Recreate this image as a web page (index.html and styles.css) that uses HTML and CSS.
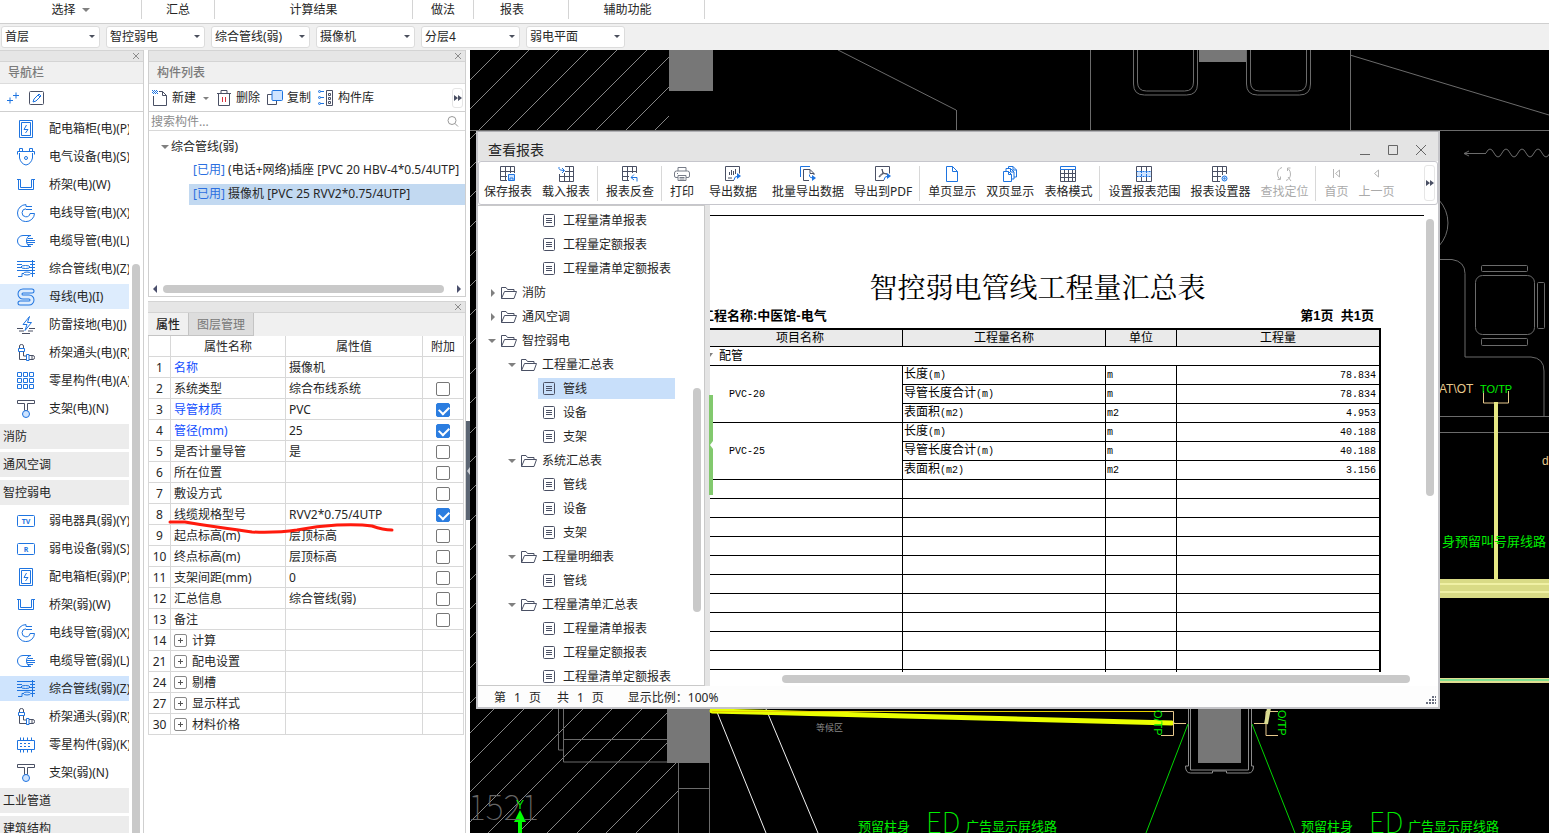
FILE: index.html
```html
<!DOCTYPE html>
<html lang="zh-CN">
<head>
<meta charset="utf-8">
<title>查看报表</title>
<link rel="stylesheet" href="styles.css">
</head>
<body>
<svg class="defs" aria-hidden="true">
  <symbol id="box" viewBox="0 0 18 18"><path class="b" d="M2.500.5h13v17h-13zM4.500 2.500h9v13h-9z"/><path class="b" d="M9.500 5 7 9.500h4L8.500 13"/></symbol>
  <symbol id="device" viewBox="0 0 18 18"><path class="b" d="M.5 6.500v-3h17v3M2.500 3.500v-3h3v3M12.500 3.500v-3h3v3M2.500 5v5Q4 16 9 17Q14 16 15.500 10V5"/><circle class="b" cx="9" cy="10" r="1.500"/></symbol>
  <symbol id="tray" viewBox="0 0 18 18"><path class="b" d="M0 3.500h3.500v8h11v-8H18M1.500 3.500v10h15v-10"/></symbol>
  <symbol id="wire" viewBox="0 0 18 18"><path class="b" d="M9 .6A8.500 8.500 0 1 0 17.500 9.500H13A4 4 0 1 1 9 4.800M9 .6v1.900M9 2.500h6M9 5.500h6"/></symbol>
  <symbol id="cable" viewBox="0 0 18 18"><path class="b" d="M14 3.500H6a5.500 5.500 0 0 0 0 11h8M14 3.500c-6 0-6 11 0 11M11 6.500h5M10 8.500h8M10 10.500h8M11 12.500h5"/></symbol>
  <symbol id="mixed" viewBox="0 0 18 18"><path class="b" d="M0 1.500h18M0 4.500h5M13 4.500h5M0 7.500h4M13 7.500h5M1 16.500h4v-3h2M14 13.500h4M0 10.500h18M15.500 0v17"/><ellipse class="b" cx="8.500" cy="7" rx="4.500" ry="1.500"/><ellipse class="b" cx="10" cy="13.500" rx="3.500" ry="1.500"/></symbol>
  <symbol id="bus" viewBox="0 0 18 18"><path d="M15 3H6a3 3 0 0 0 0 6h6a3 3 0 0 1 0 6H3" fill="none" stroke="#1e74e0" stroke-width="5" stroke-linecap="round"/><path d="M15 3H6a3 3 0 0 0 0 6h6a3 3 0 0 1 0 6H3" fill="none" stroke="#ddecfd" stroke-width="3" stroke-linecap="round"/></symbol>
  <symbol id="bolt" viewBox="0 0 18 18"><path class="b" d="M12.500.5 6 8.500h4L8 14.500l6.500-8h-4z"/><path class="k" d="M0 12.500h6M12 12.500h6M2 15h5M11 15h5M5 17.500h8"/></symbol>
  <symbol id="elbow" viewBox="0 0 18 18"><path class="k" d="M2.500 4V2q0-1.500 2-1.500t2 1.500v2M2.500 8v7.500h7M6.500 8v4h3M12 11.500h4q1.500 0 1.500 2t-1.500 2h-4M15 11.500v4"/><path class="b" d="M1.500 4.500h6v3h-6zM9.500 10.500h2.500v6H9.500z"/></symbol>
  <symbol id="grid9" viewBox="0 0 18 18"><path class="b" d="M.5.5h4v4h-4zM6.500.5h4v4h-4zM12.500.5h4v4h-4zM.5 6.500h4v4h-4zM6.500 6.500h4v4h-4zM12.500 6.500h4v4h-4zM.5 12.500h4v4h-4zM6.500 12.500h4v4h-4zM12.500 12.500h4v4h-4z"/></symbol>
  <symbol id="support" viewBox="0 0 18 18"><path class="k" d="M.5.5h17v3h-7v7h-3v-7h-7z"/><circle class="b f" cx="9" cy="14" r="3.500"/></symbol>
  <symbol id="tv" viewBox="0 0 18 18"><rect class="b" x=".5" y="3.500" width="17" height="11" rx="1"/><text class="ict" x="9" y="12" text-anchor="middle">TV</text></symbol>
  <symbol id="rr" viewBox="0 0 18 18"><rect class="b" x=".5" y="3.500" width="17" height="11" rx="1"/><text class="ict" x="9" y="12" text-anchor="middle">R</text></symbol>
  <symbol id="chip" viewBox="0 0 18 18"><path class="b" d="M.5 4.500h17v9H.5zM3.500 1.500v3M6.500 1.500v3M10.500 1.500v3M14.500 1.500v3M3.500 13.500v3M6.500 13.500v3M10.500 13.500v3M14.500 13.500v3"/><path class="b" stroke-dasharray="2 2" d="M3 7.500h12M3 10.500h12"/></symbol>
  <symbol id="folder" viewBox="0 0 16 14"><path class="k" d="M.5 12.500V1.500h4.500l1.500 2h6.500v2M.5 12.500l3-7h12l-2.500 7z"/></symbol>
  <symbol id="doc" viewBox="0 0 12 13"><rect class="k" x=".5" y=".5" width="11" height="12" rx="1"/><path class="k" d="M3 4.500h6M3 6.500h6M3 8.500h6"/></symbol>
  <symbol id="t-save" viewBox="0 0 16 16"><path class="k" d="M7 14.500H.5V.5h14V7M5.500.5v14M10.500.5V7M.5 5.500h14M.5 10.500H7"/><path class="b f" d="M8.500 8.500h6v6h-6zM10 14v-2h3v2"/></symbol>
  <symbol id="t-load" viewBox="0 0 16 16"><path class="k" d="M7 .5h8.500v15H1.500V8M6.500 7v8M11.500.5v15M7 5.500h8M1.500 10.500h14"/><path class="b" d="M1 1v1.500q0 2 5 2M4 2l2.500 2.500L4 7"/></symbol>
  <symbol id="t-back" viewBox="0 0 16 16"><path class="k" d="M7 14.500H.5V.5h14V7M5.500.5v14M10.500.5V7M.5 5.500h14M.5 10.500H7"/><path class="b" d="M12 8.500 9 11.500l3 2.500M9 11.500h6v4"/></symbol>
  <symbol id="t-print" viewBox="0 0 16 16"><path class="g" d="M4 5V1.500h8V5M4 11.500H2Q.5 11.500.5 10V7Q.5 5 2.500 5h11q2 0 2 2v3q0 1.500-1.500 1.500h-2M4 9.500h8v5H4zM5.500 11.500h5M5.500 13h5M3 7.500h1"/></symbol>
  <symbol id="t-out" viewBox="0 0 16 16"><path class="k" d="M9 14.500H.5V.5h14v7M3 12h4M4.500 9v-3M6.500 9V4M8.500 9V5M10.500 8V3"/><path class="b" d="M9 14q0-3.500 4-4"/><path fill="#1e74e0" d="m12 7 4 3-4 3z"/></symbol>
  <symbol id="t-batch" viewBox="0 0 16 16"><path class="b" d="M.5 11V.5H10"/><path class="k" d="M9 14.500H3.500v-11H10l4 4V9M10 3.500v4h4"/><path class="b" d="M9.500 8.500v1.500q0 2 4 2"/><path fill="#1e74e0" d="m12 9 4 3-4 3z"/></symbol>
  <symbol id="t-pdf" viewBox="0 0 16 16"><path class="k" d="M9 14.500H.5V.5h14v7M7 3c2 5-1 7-3 8 1-3 4-4 8-3C9 8 7 6 7 3"/><path class="b" d="M9 14q0-3.500 4-4"/><path fill="#1e74e0" d="m12 7 4 3-4 3z"/></symbol>
  <symbol id="t-page" viewBox="0 0 16 16"><path class="b" d="M2.500.5h6l5 5v10h-11zM8.500.5v5h5"/></symbol>
  <symbol id="t-pages" viewBox="0 0 16 16"><path class="b" d="M1.500 5.500h5l3 3v7h-8zM6.500 5.500v3h3M4 5V2.500h4.500l3.500 3.500v7H10M6.500 2V.5H11L14.500 4v7H12M8.500 2.500V6H12M11 .5V4h3.500"/></symbol>
  <symbol id="t-mode" viewBox="0 0 16 16"><path class="k" d="M.5 3.500v12h15v-12M4.500 4v11M8.500 4v11M12.500 4v11M.5 7.500h15M.5 11.500h15"/><path class="b" d="M.5.5h15v3H.5z"/></symbol>
  <symbol id="t-range" viewBox="0 0 16 16"><path class="k" d="M.5.5h15v15H.5zM5.500.5v15M10.500.5v15"/><path fill="#cfe4ff" d="M1 5h14v6H1z"/><path class="b" stroke-dasharray="2 1" d="M.5 5.500h15M.5 10.500h15M5.500 5v6M10.500 5v6"/></symbol>
  <symbol id="t-set" viewBox="0 0 16 16"><path class="k" d="M8 15.500H.5V.5h14V8M5.500.5v15M10.500.5V9M.5 5.500h14M.5 10.500H9"/><circle class="b f" cx="12.500" cy="12.500" r="2.500"/><circle class="b" cx="12.500" cy="12.500" r=".7"/></symbol>
  <symbol id="t-find" viewBox="0 0 16 16"><path class="l" d="M6 1.500Q1.500 3 1.500 8q0 3 2 5M1.500 13.500h3v-3M10 14.500Q14.500 13 14.500 8q0-3-2-5M14.500 2h-3v3M12 11l3 4"/></symbol>
  <symbol id="t-first" viewBox="0 0 16 16"><path class="l" d="M5.500 3v9M11.500 4v7l-4-3.500z"/></symbol>
  <symbol id="t-prev" viewBox="0 0 16 16"><path class="l" d="M10.500 4v7l-4-3.500z"/></symbol>
  <symbol id="more" viewBox="0 0 8 6"><path fill="#4a4f63" d="M0 0 4 3 0 6zM4 0l4 3-4 3z"/></symbol>
  <symbol id="close" viewBox="0 0 8 8"><path class="x" d="m1 1 6 6M7 1 1 7"/></symbol>
</svg>

<header class="ribbon">
  <span>选择<i class="down"></i></span><span>汇总</span><span>计算结果</span><span>做法</span><span class="shift">报表</span><span class="shift">辅助功能</span>
</header>

<div class="filters">
  <label class="pick"><select aria-label="楼层"><option>首层</option></select></label>
  <label class="pick"><select aria-label="专业"><option>智控弱电</option></select></label>
  <label class="pick"><select aria-label="构件类型"><option>综合管线(弱)</option></select></label>
  <label class="pick"><select aria-label="构件"><option>摄像机</option></select></label>
  <label class="pick"><select aria-label="分层"><option>分层4</option></select></label>
  <label class="pick"><select aria-label="图纸"><option>弱电平面</option></select></label>
</div>

<main class="work">
  <aside class="nav">
    <div class="strip"><svg><use href="#close"/></svg></div>
    <h2 class="caption">导航栏</h2>
    <div class="tools">
      <svg class="i16" viewBox="0 0 16 16"><path class="b" d="M2 10.500h6M5 7.500v6M8 5.500h6M11 2.500v6"/></svg>
      <svg class="i16" viewBox="0 0 16 16"><rect class="k" x=".5" y="1.500" width="14" height="13" rx="1"/><path class="b" d="m4 12 1-3 5-5 2 2-5 5zM9 5l2 2"/></svg>
    </div>
    <div class="navbody">
      <ul class="navlist">
        <li><svg><use href="#box"/></svg>配电箱柜(电)(P)</li>
        <li><svg><use href="#device"/></svg>电气设备(电)(S)</li>
        <li><svg><use href="#tray"/></svg>桥架(电)(W)</li>
        <li><svg><use href="#wire"/></svg>电线导管(电)(X)</li>
        <li><svg><use href="#cable"/></svg>电缆导管(电)(L)</li>
        <li><svg><use href="#mixed"/></svg>综合管线(电)(Z)</li>
        <li class="hot"><svg><use href="#bus"/></svg>母线(电)(I)</li>
        <li><svg><use href="#bolt"/></svg>防雷接地(电)(J)</li>
        <li><svg><use href="#elbow"/></svg>桥架通头(电)(R)</li>
        <li><svg><use href="#grid9"/></svg>零星构件(电)(A)</li>
        <li><svg><use href="#support"/></svg>支架(电)(N)</li>
        <li class="group">消防</li>
        <li class="group">通风空调</li>
        <li class="group">智控弱电</li>
        <li><svg><use href="#tv"/></svg>弱电器具(弱)(Y)</li>
        <li><svg><use href="#rr"/></svg>弱电设备(弱)(S)</li>
        <li><svg><use href="#box"/></svg>配电箱柜(弱)(P)</li>
        <li><svg><use href="#tray"/></svg>桥架(弱)(W)</li>
        <li><svg><use href="#wire"/></svg>电线导管(弱)(X)</li>
        <li><svg><use href="#cable"/></svg>电缆导管(弱)(L)</li>
        <li class="on"><svg><use href="#mixed"/></svg>综合管线(弱)(Z)</li>
        <li><svg><use href="#elbow"/></svg>桥架通头(弱)(R)</li>
        <li><svg><use href="#chip"/></svg>零星构件(弱)(K)</li>
        <li><svg><use href="#support"/></svg>支架(弱)(N)</li>
        <li class="group">工业管道</li>
        <li class="group">建筑结构</li>
      </ul>
      <div class="navthumb"></div>
    </div>
  </aside>

  <div class="mid">
    <section class="parts">
      <div class="strip"><svg><use href="#close"/></svg></div>
      <h2 class="caption">构件列表</h2>
      <div class="tools parttools">
        <button><svg class="i16" viewBox="0 0 16 16"><path class="k" d="M1.500 6v9.500h13v-10l-4-4H7M10.500 1.500v4h4"/><path class="b" stroke-dasharray="1 1" d="M0 .5h5M1 1.500h5M0 2.500h5M1 3.500h5"/></svg>新建<i class="down small"></i></button>
        <button><svg class="i16" viewBox="0 0 16 16"><path class="k" d="M1 3.500h14M2.500 3.500v12h11v-12M5 3V.5h6V3"/><path stroke="#d8323c" d="M6.500 7v5M9.500 7v5"/></svg>删除</button>
        <button><svg class="i16" viewBox="0 0 16 16"><path class="k" d="M5 4.500H.5v10h9V11"/><rect class="b f" x="5" y=".5" width="10.500" height="10" rx="1"/></svg>复制</button>
        <button><svg class="i16" viewBox="0 0 16 16"><path class="b" d="M1 1.500h5M1 7.500h5M1 13.500h5"/><circle class="b f" cx="1.500" cy="1.500" r="1"/><circle class="b f" cx="1.500" cy="7.500" r="1"/><circle class="b f" cx="1.500" cy="13.500" r="1"/><path class="k" d="M8.500.5h6v15h-6zM10.500 3.500h2v2h-2zM10.500 7.500h2v2h-2zM10.500 11.500h2v2h-2z"/></svg>构件库</button>
        <span class="morebtn"><svg><use href="#more"/></svg></span>
      </div>
      <label class="search"><input type="text" aria-label="搜索构件" placeholder="搜索构件..."><svg class="i12" viewBox="0 0 12 12"><circle cx="5" cy="5.500" r="4" fill="none" stroke="#999"/><path stroke="#999" d="m8 8.500 3 3"/></svg></label>
      <div class="parttree">
        <div class="root"><i class="down"></i>综合管线(弱)</div>
        <div class="leaf"><em>[已用]</em> (电话+网络)插座 [PVC 20 HBV-4*0.5/4UTP]</div>
        <div class="leaf sel"><em>[已用]</em> 摄像机 [PVC 25 RVV2*0.75/4UTP]</div>
      </div>
      <div class="hscroll"><i class="left"></i><b></b><i class="right"></i></div>
    </section>

    <section class="props">
      <div class="strip"><svg><use href="#close"/></svg></div>
      <div class="tabs"><button class="cur">属性</button><button>图层管理</button></div>
      <table class="ptable">
        <colgroup><col class="c0"><col class="c1"><col class="c2"><col class="c3"></colgroup>
        <tr><th></th><th>属性名称</th><th>属性值</th><th>附加</th></tr>
        <tr><td>1</td><td class="link">名称</td><td>摄像机</td><td></td></tr>
        <tr><td>2</td><td>系统类型</td><td>综合布线系统</td><td><input type="checkbox" aria-label="系统类型"></td></tr>
        <tr><td>3</td><td class="link">导管材质</td><td>PVC</td><td><input type="checkbox" aria-label="导管材质" checked></td></tr>
        <tr><td>4</td><td class="link">管径(mm)</td><td>25</td><td><input type="checkbox" aria-label="管径" checked></td></tr>
        <tr><td>5</td><td>是否计量导管</td><td>是</td><td><input type="checkbox" aria-label="是否计量导管"></td></tr>
        <tr><td>6</td><td>所在位置</td><td></td><td><input type="checkbox" aria-label="所在位置"></td></tr>
        <tr><td>7</td><td>敷设方式</td><td></td><td><input type="checkbox" aria-label="敷设方式"></td></tr>
        <tr><td>8</td><td>线缆规格型号</td><td>RVV2*0.75/4UTP</td><td><input type="checkbox" aria-label="线缆规格型号" checked></td></tr>
        <tr><td>9</td><td>起点标高(m)</td><td>层顶标高</td><td><input type="checkbox" aria-label="起点标高"></td></tr>
        <tr><td>10</td><td>终点标高(m)</td><td>层顶标高</td><td><input type="checkbox" aria-label="终点标高"></td></tr>
        <tr><td>11</td><td>支架间距(mm)</td><td>0</td><td><input type="checkbox" aria-label="支架间距"></td></tr>
        <tr><td>12</td><td>汇总信息</td><td>综合管线(弱)</td><td><input type="checkbox" aria-label="汇总信息"></td></tr>
        <tr><td>13</td><td>备注</td><td></td><td><input type="checkbox" aria-label="备注"></td></tr>
        <tr><td>14</td><td><button class="plus" aria-label="展开"></button>计算</td><td></td><td></td></tr>
        <tr><td>21</td><td><button class="plus" aria-label="展开"></button>配电设置</td><td></td><td></td></tr>
        <tr><td>24</td><td><button class="plus" aria-label="展开"></button>剔槽</td><td></td><td></td></tr>
        <tr><td>27</td><td><button class="plus" aria-label="展开"></button>显示样式</td><td></td><td></td></tr>
        <tr><td>30</td><td><button class="plus" aria-label="展开"></button>材料价格</td><td></td><td></td></tr>
      </table>
      <svg class="mark" viewBox="0 0 230 16"><path d="M3 3 18 3Q35 6 50 8Q72 11 85 13Q110 14 130 11Q150 7 170 6Q192 5 205 7Q216 11 225 11" fill="none" stroke="#ff1a0d" stroke-width="3" stroke-linecap="round"/></svg>
    </section>
    <div class="grab"></div>
  </div>

  <section class="canvas">
    <svg class="cad">
      <defs><clipPath id="floor"><path d="M470 50h199v81H470zM470 131h8v578h-8zM470 708h198v55h10v70H470z"/></clipPath></defs>
      <g transform="translate(-470,-50)" fill="none" stroke="#6b6b6b">
        <g clip-path="url(#floor)" stroke="#858585">
          <path d="M470 80l60-60M470 109l90-90M470 139l120-120M470 168l150-150M470 197l170-170M470 227l200-200M470 256l200-200M470 286l200-200M470 315l200-200"/>
          <path d="M470 344l30-30M470 374l30-30M470 403l30-30M470 433l30-30M470 462l30-30M470 491l30-30M470 521l30-30M470 550l30-30M470 580l30-30M470 609l30-30M470 638l30-30M470 668l30-30M470 703l30-30"/>
          <path d="M470 733l60-60M470 763l90-90M470 792l120-120M470 822l150-150M470 851l180-180M470 881l210-210M470 910l210-210M470 940l210-210M470 969l210-210M470 999l210-210"/>
        </g>
        <path d="M558.500 705v45h5M563.500 705v57h105M563.500 739.500h105M709.500 705v128M678.500 763v70M678 788.500h31"/>
        <path d="M669 50h44v41h-44zM667 705h43v58h-43zM1199 50h47v12h-47z" fill="#777" stroke="none"/>
        <path d="M470 130.500h1079M956.500 130v-20M956 110 838 50M1090.500 50v80M1350.500 50v80M1350 55l199 60"/>
        <path d="M1133.500 50v34q0 11 11 11h42q11 0 11-11V50M1137.500 50v32q0 9 9 9h38q9 0 9-9V50M1246.500 50v34q0 11 11 11h42q11 0 11-11V50M1250.500 50v32q0 9 9 9h38q9 0 9-9V50"/>
        <path d="M1464 153.500h22M1486 153q4-8 8 0t8 0 8 0 8 0 8 0 8 0 8 0 8 0M1469 151l-5 2.500 5 2.500"/>
        <path d="M1439 200a34 34 0 0 1 0 46M1439 259.500h13q13 2 13 14v83.500h66q13 1 13 14V416M1439 416.500h110M1439 432.500h110"/>
        <rect x="1475.500" y="275.500" width="59" height="59" rx="7"/><rect x="1481.500" y="265.500" width="46" height="6" rx="1"/><rect x="1481.500" y="338.500" width="46" height="7" rx="1"/><rect x="1537.500" y="282.500" width="7" height="46" rx="1"/>
        <path stroke="#e8c98d" d="M1483.500 391v12h25v-12"/>
        <path stroke="#e6e884" stroke-width="4" d="M1496 402v177"/>
        <path stroke="#d9db86" stroke-width="19" d="M1439 588.500h110"/><path stroke="#f0f1a5" stroke-width="2" d="M1439 584h110M1439 592h110"/>
        <path stroke="#e0dd92" stroke-width="5" d="M1439 680.500h110"/><path stroke="#7fe08f" stroke-width="2" d="M1439 680h110"/>
        <path stroke="#f2f2f2" d="m717 712 49 121M766 709l52 124"/>
        <path stroke="#eaff00" stroke-width="5" stroke-linecap="round" d="m712 711 460 12"/><path stroke="#e8d000" d="M712 711.500h461"/>
        <path stroke="#e8c98d" d="M1160 711.500h13.500v24H1161M1174 723.500h12M1254 723.500h12M1278 711.500h-12v24h12"/>
        <path fill="#777" stroke="none" d="M1198 705h43v58h-43z"/>
        <path d="M1188.500 705v61h-3q0 7 5 7h22v-2h14v2h22q5 0 5-7h-2v-61M1190.500 705v65h58v-65" stroke="#8c8c8c"/>
        <path stroke="#00d600" d="M1188 724 1146 833M1252 724l43 109"/>
        <path stroke="#dadc91" stroke-width="4" d="m1269 708-3 16"/>
        <path stroke="#00ff00" stroke-width="4" d="M520 833v-14"/><path fill="#00ff00" stroke="none" d="m514 822 6-12 6 12z"/>
      </g>
      <g transform="translate(-470,-50)" class="cadtext">
        <text x="468" y="820" class="big">1521</text><text x="516" y="809" class="y">Y</text>
        <text x="816" y="731" class="dim">等候区</text>
        <text x="858" y="831">预留柱身</text><text x="926" y="833" class="led">ED</text><text x="966" y="831">广告显示屏线路</text>
        <text x="1301" y="831">预留柱身</text><text x="1369" y="833" class="led">ED</text><text x="1408" y="831">广告显示屏线路</text>
        <text x="1442" y="546">身预留叫号屏线路</text>
        <text x="1439" y="393" class="tan">AT\OT</text><text x="1480" y="393" class="to">TO/TP</text>
        <text class="to" transform="translate(1154,710) rotate(90)">O/TP</text><text class="to" transform="translate(1278,710) rotate(90)">O/TP</text>
        <text x="1542" y="465" class="tan">d</text>
      </g>
    </svg>

    <div class="win">
      <div class="titlebar"><span>查看报表</span>
        <button aria-label="最小化"><svg viewBox="0 0 12 12"><path class="w" d="M1 10.500h10"/></svg></button>
        <button aria-label="最大化"><svg viewBox="0 0 12 12"><path class="w" d="M1.500 1.500h9v9h-9z"/></svg></button>
        <button aria-label="关闭"><svg viewBox="0 0 12 12"><path class="w" d="m1 1 10 10M11 1 1 11"/></svg></button>
      </div>
      <div class="wtools">
        <button><svg><use href="#t-save"/></svg>保存报表</button>
        <button><svg><use href="#t-load"/></svg>载入报表</button><hr>
        <button><svg><use href="#t-back"/></svg>报表反查</button><hr>
        <button class="wide"><svg><use href="#t-print"/></svg>打印</button>
        <button class="wide"><svg><use href="#t-out"/></svg>导出数据</button>
        <button><svg><use href="#t-batch"/></svg>批量导出数据</button>
        <button><svg><use href="#t-pdf"/></svg>导出到PDF</button><hr>
        <button><svg><use href="#t-page"/></svg>单页显示</button>
        <button><svg><use href="#t-pages"/></svg>双页显示</button>
        <button><svg><use href="#t-mode"/></svg>表格模式</button><hr>
        <button><svg><use href="#t-range"/></svg>设置报表范围</button>
        <button><svg><use href="#t-set"/></svg>报表设置器</button>
        <button disabled><svg><use href="#t-find"/></svg>查找定位</button><hr>
        <button disabled><svg><use href="#t-first"/></svg>首页</button>
        <button disabled><svg><use href="#t-prev"/></svg>上一页</button>
        <span class="morebtn"><svg><use href="#more"/></svg></span>
      </div>
      <div class="wbody">
        <div class="wtree">
          <div class="l3"><svg><use href="#doc"/></svg>工程量清单报表</div>
          <div class="l3"><svg><use href="#doc"/></svg>工程量定额报表</div>
          <div class="l3"><svg><use href="#doc"/></svg>工程量清单定额报表</div>
          <div class="l1"><i class="side"></i><svg><use href="#folder"/></svg>消防</div>
          <div class="l1"><i class="side"></i><svg><use href="#folder"/></svg>通风空调</div>
          <div class="l1"><i class="down"></i><svg><use href="#folder"/></svg>智控弱电</div>
          <div class="l2"><i class="down"></i><svg><use href="#folder"/></svg>工程量汇总表</div>
          <div class="l3 sel"><svg><use href="#doc"/></svg>管线</div>
          <div class="l3"><svg><use href="#doc"/></svg>设备</div>
          <div class="l3"><svg><use href="#doc"/></svg>支架</div>
          <div class="l2"><i class="down"></i><svg><use href="#folder"/></svg>系统汇总表</div>
          <div class="l3"><svg><use href="#doc"/></svg>管线</div>
          <div class="l3"><svg><use href="#doc"/></svg>设备</div>
          <div class="l3"><svg><use href="#doc"/></svg>支架</div>
          <div class="l2"><i class="down"></i><svg><use href="#folder"/></svg>工程量明细表</div>
          <div class="l3"><svg><use href="#doc"/></svg>管线</div>
          <div class="l2"><i class="down"></i><svg><use href="#folder"/></svg>工程量清单汇总表</div>
          <div class="l3"><svg><use href="#doc"/></svg>工程量清单报表</div>
          <div class="l3"><svg><use href="#doc"/></svg>工程量定额报表</div>
          <div class="l3"><svg><use href="#doc"/></svg>工程量清单定额报表</div>
          <b class="treethumb"></b>
        </div>
        <div class="splitter"></div>
        <div class="view">
          <div class="viewrow">
            <div class="page">
              <div class="sheet">
                <h1>智控弱电管线工程量汇总表</h1>
                <div class="meta"><span>工程名称:中医馆-电气</span><span>第1页&nbsp; 共1页</span></div>
                <table class="report">
                  <colgroup><col class="r1"><col class="r2"><col class="r3"><col class="r4"></colgroup>
                  <tr class="head"><th>项目名称</th><th>工程量名称</th><th>单位</th><th>工程量</th></tr>
                  <tr><td colspan="4" class="cat"><i class="down"></i>配管</td></tr>
                  <tr><td rowspan="3" class="item">PVC-20</td><td>长度<s>(m)</s></td><td><s>m</s></td><td class="num">78.834</td></tr>
                  <tr><td>导管长度合计<s>(m)</s></td><td><s>m</s></td><td class="num">78.834</td></tr>
                  <tr><td>表面积<s>(m2)</s></td><td><s>m2</s></td><td class="num">4.953</td></tr>
                  <tr><td rowspan="3" class="item">PVC-25</td><td>长度<s>(m)</s></td><td><s>m</s></td><td class="num">40.188</td></tr>
                  <tr><td>导管长度合计<s>(m)</s></td><td><s>m</s></td><td class="num">40.188</td></tr>
                  <tr><td>表面积<s>(m2)</s></td><td><s>m2</s></td><td class="num">3.156</td></tr>
                  <tr><td></td><td></td><td></td><td></td></tr>
                  <tr><td></td><td></td><td></td><td></td></tr>
                  <tr><td></td><td></td><td></td><td></td></tr>
                  <tr><td></td><td></td><td></td><td></td></tr>
                  <tr><td></td><td></td><td></td><td></td></tr>
                  <tr><td></td><td></td><td></td><td></td></tr>
                  <tr><td></td><td></td><td></td><td></td></tr>
                  <tr><td></td><td></td><td></td><td></td></tr>
                  <tr><td></td><td></td><td></td><td></td></tr>
                  <tr><td></td><td></td><td></td><td></td></tr>
                  <tr><td></td><td></td><td></td><td></td></tr>
                </table>
              </div>
            </div>
            <div class="vbar"></div>
          </div>
          <div class="hbar"></div>
        </div>
        <div class="fold"></div>
      </div>
      <footer class="status"><span class="pg"><i>第</i><i>1</i><i>页</i></span><span class="pg"><i>共</i><i>1</i><i>页</i></span><span class="zoom">显示比例：100%</span>
        <svg class="grip" viewBox="0 0 10 10"><path fill="#6b7080" d="M0 7h2v2H0zM3 7h2v2H3zM3 4h2v2H3zM6 7h2v2H6zM6 4h2v2H6zM6 1h2v2H6zM9 7h1v2H9zM9 4h1v2H9zM9 1h1v2H9z"/></svg>
      </footer>
    </div>
  </section>
</main>
</body>
</html>
```
FILE: styles.css
```css
* { box-sizing: border-box; }
html, body { height: 100%; }
body {
  margin: 0;
  display: flex;
  flex-direction: column;
  overflow: hidden;
  background: #fff;
  color: #262626;
  font: 12px/16px "Noto Sans", "Noto Sans CJK SC", sans-serif;
}
button, input, select { font: inherit; color: inherit; }
button { background: none; border: 0; padding: 0; }
ul { list-style: none; margin: 0; padding: 0; }
.defs { position: absolute; width: 0; height: 0; }
.b { fill: none; stroke: #1e74e0; }
.k { fill: none; stroke: #4a5064; }
.g { fill: none; stroke: #777c88; }
.l { fill: none; stroke: #b4b4b4; }
.w { fill: none; stroke: #666; }
.x { fill: none; stroke: #8c8c8c; }
.f { fill: #cfe4ff; }
.ict { font: bold 7px "Noto Sans", sans-serif; fill: #1e74e0; }
.i16 { width: 16px; height: 16px; flex: none; }
.i12 { width: 12px; height: 12px; flex: none; }
.down { display: inline-block; flex: none; border: 4px solid transparent; border-top-color: #808080; border-bottom: 0; }
.down.small { border-width: 3px 3px 0; }
.side { display: inline-block; flex: none; border: 4px solid transparent; border-left-color: #808080; border-right: 0; }

.ribbon {
  flex: none;
  display: grid;
  grid-template-columns: 142px 73px 198px 61px 95px 136px 1fr;
  height: 24px;
  border-bottom: 1px solid #cfcfcf;
}
.ribbon span {
  display: flex;
  align-items: center;
  justify-content: center;
  gap: 6px;
  height: 19px;
  border-right: 1px solid #d4d4d4;
}
.ribbon span:last-child { padding-left: 0; }
.ribbon .shift { padding-right: 18px; }

.filters { flex: none; display: flex; gap: 6px; height: 26px; padding: 2px 1px; background: #f0f0f0; }
.pick { position: relative; width: 99px; height: 22px; }
.pick::after { content: ""; position: absolute; right: 5px; top: 9px; border: 3px solid transparent; border-top: 3px solid #4a4f5c; border-bottom: 0; }
.pick select {
  appearance: none;
  width: 100%;
  height: 22px;
  padding: 0 3px;
  border: 1px solid #dcdcdc;
  border-radius: 3px;
  background: #fff;
}

.work { flex: 1; min-height: 0; display: flex; }
.nav { flex: none; width: 144px; display: flex; flex-direction: column; border-right: 1px solid #cfcfcf; }
.strip { flex: none; height: 12px; background: #e6e6e6; border-top: 1px solid #d4d4d4; border-bottom: 1px solid #d4d4d4; display: flex; align-items: center; justify-content: flex-end; padding-right: 3px; }
.strip svg { width: 8px; height: 8px; }
.caption { flex: none; margin: 0; height: 22px; padding: 3px 8px; background: #f0f0f0; border-bottom: 1px solid #dcdcdc; color: #7b7b7b; font-size: 12px; font-weight: 500; line-height: 16px; }
.tools { flex: none; height: 28px; display: flex; align-items: center; gap: 8px; padding: 0 5px; border-bottom: 1px solid #cfcfcf; }
.navbody { flex: 1; min-height: 0; display: flex; gap: 3px; overflow: hidden; }
.navlist { width: 129px; padding-top: 4px; }
.navlist li { display: flex; align-items: center; gap: 14px; height: 25px; margin-bottom: 3px; padding-left: 17px; white-space: nowrap; overflow: hidden; }
.navlist svg { width: 18px; height: 18px; flex: none; }
.navlist .hot { background: #ddecfd; }
.navlist .on { background: #cfe4fd; }
.navlist .group { padding-left: 3px; background: #ececec; }
.navthumb { width: 8px; margin-top: 152px; border-radius: 4px 4px 0 0; background: #c9c9c9; }

.mid { position: relative; flex: none; width: 326px; display: flex; flex-direction: column; gap: 4px; padding: 0 4px; }
.parts { flex: none; height: 247px; display: flex; flex-direction: column; border: 1px solid #cfcfcf; border-top: 0; }
.parttools { gap: 7px; padding: 1px 2px 0 3px; }
.parttools button { display: flex; align-items: center; gap: 4px; }
.parttools .small { margin-left: 3px; }
.morebtn { margin-left: auto; display: flex; align-items: center; justify-content: center; width: 11px; height: 20px; border: 1px solid #e6e6e6; border-radius: 3px; }
.morebtn svg { width: 8px; height: 6px; flex: none; }
.search { flex: none; height: 19px; display: flex; align-items: center; padding-right: 6px; border-bottom: 1px solid #d8d8d8; }
.search input { flex: 1; min-width: 0; height: 18px; padding: 0 2px; border: 0; outline: 0; }
.search input::placeholder { color: #8c8c8c; opacity: 1; }
.parttree { flex: 1; padding-top: 5px; overflow: hidden; }
.root { display: flex; align-items: center; gap: 2px; height: 21px; padding-left: 12px; margin-bottom: 3px; }
.leaf { height: 21px; margin: 0 0 3px 40px; padding: 2px 4px; white-space: nowrap; overflow: hidden; }
.leaf em { color: #2b6fe0; font-style: normal; }
.leaf.sel { background: #c2d9f1; }
.hscroll { flex: none; display: flex; align-items: center; justify-content: space-between; height: 14px; padding: 0 4px; }
.hscroll b { width: 281px; height: 8px; border-radius: 4px; background: #c9c9c9; margin-right: 8px; }
.hscroll .left { border: 4px solid transparent; border-right-color: #4a4f6c; border-left: 0; }
.hscroll .right { border: 4px solid transparent; border-left-color: #4a4f6c; border-right: 0; }

.props { position: relative; flex: 1; min-height: 0; border-right: 1px solid #cfcfcf; }
.tabs { display: flex; height: 23px; background: #f0f0f0; }
.tabs button { padding: 1px 8px 0; border: 1px solid #c4c4c4; border-top: 0; border-left: 0; background: #ddd; color: #777; }
.tabs .cur { background: #f0f0f0; color: #222; font-weight: 500; }
.ptable { width: 316px; table-layout: fixed; border-collapse: separate; border-spacing: 0; border-left: 1px solid #d8d8d8; }
.ptable .c0 { width: 22px; } .ptable .c1 { width: 115px; } .ptable .c2 { width: 137px; }
.ptable th, .ptable td { height: 21px; padding: 2px 3px 0; border-right: 1px solid #d8d8d8; border-bottom: 1px solid #d8d8d8; font-weight: 400; line-height: 16px; white-space: nowrap; }
.ptable td:first-child { padding: 2px 0 0; text-align: center; }
.ptable td:last-child { padding: 1px 0 0; text-align: center; }
.ptable th:last-child { padding: 2px 0 0; }
.ptable .link { color: #1450ff; }
.ptable input { appearance: none; display: block; width: 14px; height: 14px; margin: 0 auto; border: 1px solid #777; border-radius: 2px; background: #fff; }
.ptable input:checked { border-color: #2b7de0; background: #2b7de0; }
.ptable input:checked::after { content: ""; display: block; width: 8px; height: 5px; margin: 2px; border: 2px solid #fff; border-top: 0; border-right: 0; transform: rotate(-45deg); }
.plus { width: 13px; height: 13px; margin-right: 5px; border: 1px solid #888; border-radius: 2px; vertical-align: -1px; background: linear-gradient(#555, #555) center / 5px 1px no-repeat, linear-gradient(#555, #555) center / 1px 5px no-repeat; }
.mark { position: absolute; left: 19px; top: 218px; width: 230px; height: 16px; pointer-events: none; }
.grab { position: absolute; right: 0; top: 371px; width: 4px; height: 99px; background: #5b6573; }
.grab::after { content: ""; position: absolute; right: 0; top: 46px; border: 4px solid transparent; border-right: 3px solid #ccd0d6; border-left: 0; }

.canvas { position: relative; flex: 1; min-width: 0; background: #000; overflow: hidden; }
.cad { display: block; width: 100%; height: 100%; }
.cadtext { fill: #00f000; font: 13px "Liberation Sans", "Noto Sans CJK SC", sans-serif; }
.cadtext .led { font-size: 28px; font-weight: 100; font-family: "Noto Sans CJK SC", sans-serif; }
.cadtext .big { fill: #666; font: 100 34px "Noto Sans CJK SC", sans-serif; }
.cadtext .y { font-size: 12px; }
.cadtext .dim { fill: #888; font-size: 9px; }
.cadtext .to { font-size: 11px; }
.cadtext .tan { fill: #e8c98d; font-size: 12px; }

.win { position: absolute; left: 6px; right: 109px; top: 81px; bottom: 124px; display: flex; flex-direction: column; background: #fdfdfd; border: 2px solid #c4c4c8; border-top: 1px solid #b0b0b4; }
.titlebar { flex: none; display: flex; align-items: flex-end; gap: 16px; height: 29px; padding: 0 11px 3px 10px; background: #e4e4e4; }
.titlebar span { margin-right: auto; font-size: 14px; line-height: 16px; }
.titlebar button { width: 12px; height: 12px; margin-bottom: 2px; }
.titlebar svg { display: block; width: 12px; height: 12px; }
.wtools { flex: none; display: flex; align-items: center; height: 44px; padding-right: 2px; border: 1px solid #c6c6cc; border-radius: 3px; background: #fff; }
.wtools button { flex: none; display: flex; flex-direction: column; align-items: center; gap: 2px; padding: 0 5px; white-space: nowrap; }
.wtools button svg { width: 16px; height: 16px; }
.wtools .wide { padding-right: 10px; }
.wtools button:disabled { color: #aaa; }
.wtools hr { width: 1px; height: 35px; margin: 0 3px 0 2px; border: 0; background: #d8d8d8; }
.wtools .morebtn { height: 36px; }
.wbody { position: relative; flex: 1; min-height: 0; display: flex; }
.wtree { position: relative; flex: none; width: 227px; padding-top: 4px; border: 1px solid #c9c9c9; border-left: 0; background: #fff; overflow: hidden; }
.wtree div { display: flex; align-items: center; height: 21px; margin-bottom: 3px; }
.wtree .l1 { gap: 5px; padding-left: 10px; }
.wtree .l1 .down, .wtree .l2 .down { width: 8px; }
.wtree .l1 .side { margin: 0 1px 0 3px; }
.wtree .l2 { gap: 5px; padding-left: 30px; }
.wtree .l3 { gap: 8px; margin-left: 60px; padding-left: 5px; }
.wtree .l3.sel { width: 137px; background: #c8dffa; }
.wtree .l3 svg { width: 12px; height: 13px; flex: none; }
.wtree .l1 svg, .wtree .l2 svg { width: 16px; height: 14px; flex: none; }
.treethumb { position: absolute; right: 3px; top: 182px; width: 8px; height: 224px; border-radius: 4px; background: #c9c9c9; }
.splitter { flex: none; width: 5px; background: #e4e4e4; }
.view { flex: 1; min-width: 0; display: flex; flex-direction: column; background: #fff; }
.viewrow { flex: 1; min-height: 0; display: flex; }
.page { flex: 1; min-width: 0; margin-top: 10px; border-top: 1px solid #000; overflow: hidden; color: #000; }
.sheet { width: 683px; margin-left: -12px; font-family: "Liberation Mono", "Noto Sans CJK SC", monospace; }
.sheet h1 { margin: 50px 0 2px; padding-right: 4px; text-align: center; font: 400 28px/40px "Noto Serif CJK SC", "Noto Sans CJK SC", sans-serif; }
.meta { display: flex; justify-content: space-between; padding: 0 7px 0 3px; margin-bottom: 4px; font: bold 13px/16px "Liberation Sans", "Noto Sans CJK SC", sans-serif; }
.report { width: 683px; table-layout: fixed; border-collapse: separate; border-spacing: 0; border-top: 2px solid #000; border-right: 2px solid #000; }
.report .r1 { width: 205px; } .report .r2 { width: 203px; } .report .r3 { width: 71px; }
.report th, .report td { height: 19px; padding: 1px 1px 0; border-right: 1px solid #000; border-bottom: 1px solid #000; text-align: left; font-size: 12px; font-weight: 400; line-height: 14px; white-space: nowrap; }
.report th:last-child, .report .num, .report .cat, .report td:nth-child(4) { border-right: 0; }
.report .head th { height: 17px; background: #eaeaea; text-align: center; }
.report .cat { padding-left: 9px; }
.report .cat .down { margin-right: 6px; border-width: 4px 3px 0; vertical-align: 3px; }
.report .item { padding-left: 31px; font-size: 10px; }
.report s { font-size: 10px; text-decoration: none; }
.report .num { padding-right: 3px; text-align: right; font-size: 10px; }
.vbar { flex: none; width: 8px; height: 277px; margin: 14px 4px 0 2px; border-radius: 4px; background: #c9c9c9; }
.hbar { flex: none; height: 8px; margin: 3px 28px 3px 72px; border-radius: 4px; background: #c9c9c9; }
.fold { position: absolute; left: 231px; top: 190px; width: 4px; height: 100px; background: #82c96e; }
.fold::after { content: ""; position: absolute; right: 0; top: 46px; border: 4px solid transparent; border-right: 3px solid #fff; border-left: 0; }
.status { flex: none; display: flex; align-items: center; gap: 16px; height: 21px; padding: 2px 0 0 16px; }
.status .pg { display: flex; gap: 8px; }
.status i { font-style: normal; }
.status .zoom { margin-left: 8px; }
.grip { width: 10px; height: 10px; margin: 4px 2px 0 auto; }
```
